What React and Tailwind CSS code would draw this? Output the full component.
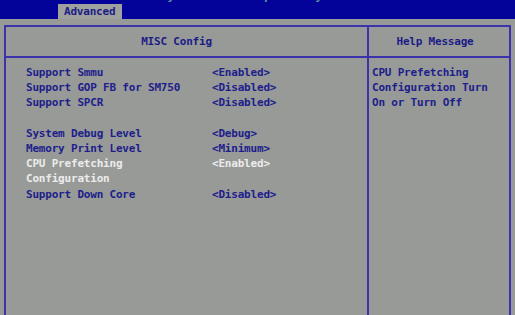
const rows = [
  { label: "Support Smmu", value: "<Enabled>" },
  { label: "Support GOP FB for SM750", value: "<Disabled>" },
  { label: "Support SPCR", value: "<Disabled>" },
  { gap: true },
  { label: "System Debug Level", value: "<Debug>" },
  { label: "Memory Print Level", value: "<Minimum>" },
  { label: "CPU Prefetching Configuration", value: "<Enabled>", active: true },
  { label: "Support Down Core", value: "<Disabled>" },
];

export default function App() {
  return (
    <div
      className="w-[515px] h-[315px] overflow-hidden bg-[#979a96] text-[11px] tracking-[-0.2px] font-bold leading-[15.2px]"
      style={{ fontFamily: '"DejaVu Sans Mono", "Liberation Mono", monospace' }}
    >
      {/* Title bar */}
      <div className="h-[19px] bg-[#03039a] flex items-end overflow-hidden">
        <div className="ml-[58px] w-[64px] h-[15px] bg-[#9ea19d] text-[#1c1c86] flex items-center pl-[6px]">
          Advanced
        </div>
        <div className="self-start -mt-[11px] ml-[33px] text-[#5fa39c] whitespace-nowrap">
          Phytium BIOS Setup Utility V2.0
        </div>
      </div>

      {/* Main box */}
      <div className="mt-[6px] ml-[4px] w-[507px] h-[290px] border-2 border-b-0 border-[#3b33ab] flex">
        <div className="w-[363px] border-r-2 border-[#3b33ab] flex flex-col">
          <div className="h-[31px] border-b-2 border-[#3b33ab] flex items-center justify-center pr-[20px] text-[#1c1c86]">
            MISC Config
          </div>
          <div className="pl-[20px] pt-[7px]">
            {rows.map((r, i) =>
              r.gap ? (
                <div key={i} className="h-[15.2px]" />
              ) : (
                <div
                  key={i}
                  className={`flex items-start ${r.active ? "text-[#ececec]" : "text-[#1e1e8c]"}`}
                >
                  <div className="w-[186px] pr-[16px]">{r.label}</div>
                  <div>{r.value}</div>
                </div>
              )
            )}
          </div>
        </div>
        <div className="flex-1 flex flex-col">
          <div className="h-[31px] border-b-2 border-[#3b33ab] flex items-center justify-center pr-[8px] text-[#1c1c86]">
            Help Message
          </div>
          <div className="pl-[3px] pt-[7px] w-[128px] text-[#1e1e8c]">
            CPU Prefetching Configuration Turn On or Turn Off
          </div>
        </div>
      </div>
    </div>
  );
}
